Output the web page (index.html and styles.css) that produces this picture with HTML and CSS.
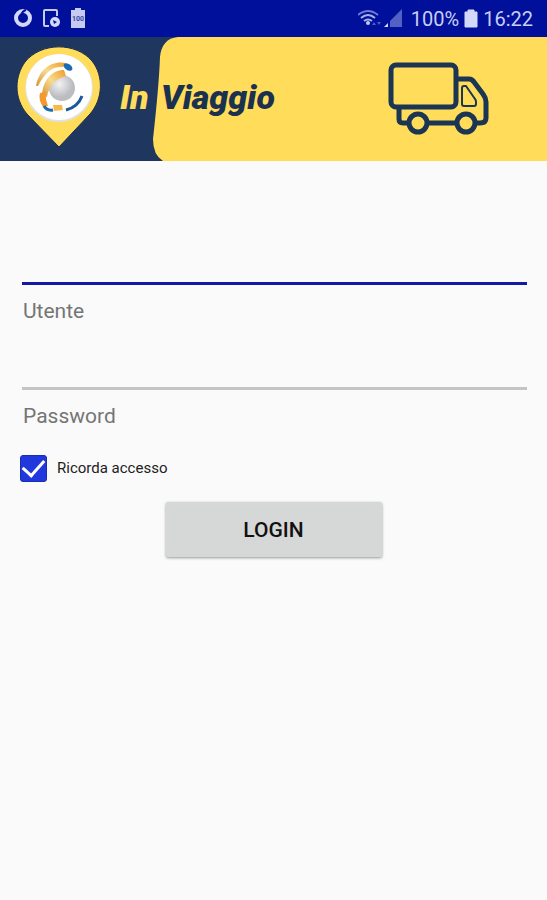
FILE: index.html
```html
<!DOCTYPE html>
<html lang="it">
<head>
    <meta charset="UTF-8">
    <meta name="viewport" content="width=device-width, initial-scale=1">
    <title>In Viaggio</title>
    <link rel="stylesheet" href="styles.css">
</head>
<body>
    <div class="statusbar">
        <div class="status-icons">
            <svg width="20" height="22" viewBox="0 0 20 22">
                <circle cx="9" cy="10" r="7" fill="none" stroke="#d3d8fa" stroke-width="4"/>
                <path d="M7 8 Q8 3 12 2" fill="none" stroke="#00109a" stroke-width="2"/>
            </svg>
            <svg width="20" height="22" viewBox="0 0 20 22">
                <path d="M7 18 H3 Q2 18 2 17 V3 Q2 2 3 2 H14 Q15 2 15 3 V8" fill="none" stroke="#c4caf2" stroke-width="2"/>
                <circle cx="13" cy="14" r="5" fill="#d3d8fa"/>
                <path d="M11 12 L15 14 L12 16 Z" fill="#00109a"/>
            </svg>
            <svg width="16" height="22" viewBox="0 0 16 22">
                <path d="M1 2 H5 V0 H11 V2 H15 V20 H1 Z" fill="#c4caf2"/>
                <text class="battery-text" x="8" y="13" text-anchor="middle">100</text>
            </svg>
        </div>
        <div class="status-info">
            <svg width="48" height="22" viewBox="0 0 48 22">
                <g fill="none" stroke="#a9b2ea" stroke-width="2">
                    <path d="M0 7 Q10 -1 20 7" stroke="#6f7cd6"/>
                    <path d="M3 10 Q10 4 17 10"/>
                    <path d="M6 13 Q10 10 14 13"/>
                </g>
                <circle cx="10" cy="15" r="2" fill="#c4caf2"/>
                <path d="M14 17 l2 -3 l2 3 Z M19 14 h4 l-2 3 Z" fill="#4b5bc8"/>
                <path d="M44 1 V19 H32 V13 Z" fill="#5361c7"/>
                <path d="M30 15 V19 H26 Z" fill="#d3d8fa"/>
            </svg>
            <span>100%</span>
            <svg width="14" height="22" viewBox="0 0 14 22">
                <path d="M1 4 H4 V2 H10 V4 H13 V19 H1 Z" fill="#d3d8fa" stroke="#d3d8fa" stroke-linejoin="round"/>
            </svg>
            <span>16:22</span>
        </div>
    </div>

    <header class="banner">
        <svg class="banner-edge" width="180" height="124" viewBox="0 0 180 124">
            <path d="M0 0 H178 C167 1 161 8 160 20 Q159 48 153 102 Q153 118 163 124 H0 Z" fill="#1f375f"/>
        </svg>
        <svg class="pin" width="86" height="104" viewBox="0 0 86 104">
            <path d="M43 102 L11 69 C-3 52 -1 31 9 17 C25 -3 60 -3 76 16 C88 31 87 54 74 69 Z" fill="#ffdc59" stroke="#1b2e50"/>
            <circle cx="43" cy="43" r="34" fill="#e0e1e3"/>
            <circle cx="43" cy="42" r="33" fill="#fff"/>
            <circle cx="46" cy="43" r="13" fill="url(#ball)"/>
            <path d="M20 41 C23 24 36 15 50 18 L47 22 C37 21 30 26 22 41 Z" fill="url(#gold)"/>
            <ellipse cx="52" cy="22" rx="5" ry="3" transform="rotate(35 52 22)" fill="#1b6bb0"/>
            <path d="M26 50 C27 35 36 25 48 25 L50 31 C39 34 33 41 31 52 Z" fill="url(#gold)"/>
            <path d="M24 48 L30 47 Q29 53 32 61 L27 62 Q22 54 24 48 Z" fill="#f3992d"/>
            <path d="M28 61 Q31 66 37 65" fill="none" stroke="#1b6bb0" stroke-width="3"/>
            <path d="M37 60 L46 60 L47 65 L38 66 Z" fill="#f8b94b"/>
            <path d="M50 65 Q62 62 66 51" fill="none" stroke="#19599c" stroke-width="3"/>
            <defs>
                <radialGradient id="ball" cx="40%" cy="35%">
                    <stop offset="0" stop-color="#f3f3f4"/>
                    <stop offset="1" stop-color="#bcbdc1"/>
                </radialGradient>
                <linearGradient id="gold" x1="0" y1="1" x2="1" y2="0">
                    <stop offset="0" stop-color="#d99335"/>
                    <stop offset=".5" stop-color="#f6dc90"/>
                    <stop offset="1" stop-color="#f29a24"/>
                </linearGradient>
            </defs>
        </svg>
        <h1 class="brand"><span class="brand-in">In</span> Viaggio</h1>
        <svg class="truck" width="104" height="76" viewBox="0 -2 104 76" fill="none" stroke="#1b3552" stroke-width="5" stroke-linejoin="round">
            <rect x="4" y="4" width="65" height="42" rx="5"/>
            <path d="M12 47 V58 Q12 62 16 62 H22 M40 62 H69 M88 62 H93 Q99 62 99 57 V41 Q99 37 96 33 L87 21 Q85 18 82 18 H70"/>
            <circle cx="31" cy="62" r="9"/>
            <circle cx="79" cy="62" r="9"/>
            <path d="M75 27 Q75 25 77 25 H79 L88 38 Q89 39 89 41 V43 Q89 45 87 45 H77 Q75 45 75 43 Z" stroke-width="2"/>
        </svg>
    </header>

    <form class="login">
        <div class="field">
            <input class="field-input active" type="text" id="utente">
            <label class="field-label" for="utente">Utente</label>
        </div>
        <div class="field">
            <input class="field-input" type="password" id="password">
            <label class="field-label" for="password">Password</label>
        </div>
        <div class="remember">
            <input class="remember-box" type="checkbox" id="ricorda" checked>
            <label for="ricorda">Ricorda accesso</label>
        </div>
        <button class="login-button" type="button">LOGIN</button>
    </form>
</body>
</html>
```
FILE: styles.css
```css
* {
    box-sizing: border-box;
}

body {
    margin: 0;
    min-height: 100vh;
    background-color: #fafafa;
    font-family: Roboto, sans-serif;
}

/* Status bar */
.statusbar {
    display: flex;
    justify-content: space-between;
    align-items: center;
    height: 37px;
    padding: 0 14px;
    background-color: #00109a;
    color: #c8cef5;
    font-size: 20px;
}

.status-icons {
    display: flex;
    gap: 8px;
}

.status-info {
    display: flex;
    align-items: center;
    gap: 5px;
}

.battery-text {
    fill: #3a489f;
    font-size: 7px;
    font-weight: bold;
}

/* Banner */
.banner {
    position: relative;
    display: flex;
    align-items: center;
    height: 124px;
    padding: 0 56px 4px 16px;
    background-color: #ffdc59;
}

.banner-edge {
    position: absolute;
    top: 0;
    left: 0;
}

.pin,
.brand {
    position: relative;
}

.brand {
    margin: 0 0 0 18px;
    color: #1b3150;
    font-size: 34px;
    font-style: italic;
    font-weight: 900;
}

.brand-in {
    margin-right: 4px;
    color: #ffdc59;
}

.truck {
    margin-left: auto;
}

/* Login form */
.login {
    display: flex;
    flex-direction: column;
    padding: 74px 20px 20px;
}

.field {
    display: flex;
    flex-direction: column;
    gap: 12px;
    height: 105px;
    padding-left: 2px;
}

.field-input {
    width: 100%;
    height: 50px;
    padding: 0 4px;
    border: 0;
    border-bottom: 3px solid #c4c4c4;
    outline: none;
    background: transparent;
    color: #222;
    font-family: inherit;
    font-size: 21px;
}

.field-input.active {
    border-bottom-color: #1219a5;
}

.field-label {
    padding-left: 1px;
    color: #757575;
    font-size: 21px;
    line-height: 28px;
}

.remember {
    display: flex;
    align-items: center;
    gap: 10px;
    height: 28px;
    margin-top: 9px;
    color: #222;
    font-size: 15px;
}

.remember-box {
    display: flex;
    justify-content: center;
    width: 27px;
    height: 27px;
    margin: 0;
    border: 1px solid #1a2bb4;
    border-radius: 3px;
    background-color: #2138dc;
    appearance: none;
}

.remember-box:checked::before {
    content: "";
    width: 10px;
    height: 18px;
    margin-top: 0;
    border: solid #fff;
    border-width: 0 3px 3px 0;
    transform: translateY(-1px) rotate(42deg);
}

.login-button {
    align-self: center;
    width: 216px;
    height: 55px;
    margin-top: 20px;
    border: 0;
    border-radius: 2px;
    background-color: #d6d8d7;
    box-shadow: 0 1px 3px rgba(0, 0, 0, 0.4);
    color: #111;
    font-family: inherit;
    font-size: 21px;
    font-weight: 500;
}
```
